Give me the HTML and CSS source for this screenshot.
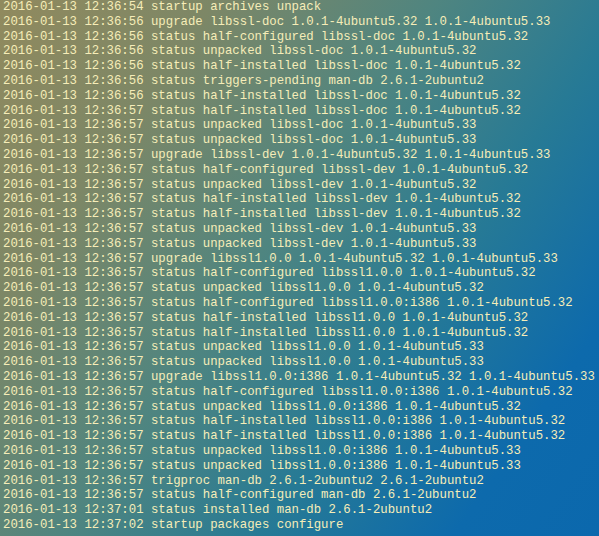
FILE: index.html
```html
<!DOCTYPE html>
<html>
<head>
<meta charset="utf-8">
<link rel="stylesheet" href="styles.css">
</head>
<body>
<pre class="log">2016-01-13 12:36:54 startup archives unpack
2016-01-13 12:36:56 upgrade libssl-doc 1.0.1-4ubuntu5.32 1.0.1-4ubuntu5.33
2016-01-13 12:36:56 status half-configured libssl-doc 1.0.1-4ubuntu5.32
2016-01-13 12:36:56 status unpacked libssl-doc 1.0.1-4ubuntu5.32
2016-01-13 12:36:56 status half-installed libssl-doc 1.0.1-4ubuntu5.32
2016-01-13 12:36:56 status triggers-pending man-db 2.6.1-2ubuntu2
2016-01-13 12:36:56 status half-installed libssl-doc 1.0.1-4ubuntu5.32
2016-01-13 12:36:57 status half-installed libssl-doc 1.0.1-4ubuntu5.32
2016-01-13 12:36:57 status unpacked libssl-doc 1.0.1-4ubuntu5.33
2016-01-13 12:36:57 status unpacked libssl-doc 1.0.1-4ubuntu5.33
2016-01-13 12:36:57 upgrade libssl-dev 1.0.1-4ubuntu5.32 1.0.1-4ubuntu5.33
2016-01-13 12:36:57 status half-configured libssl-dev 1.0.1-4ubuntu5.32
2016-01-13 12:36:57 status unpacked libssl-dev 1.0.1-4ubuntu5.32
2016-01-13 12:36:57 status half-installed libssl-dev 1.0.1-4ubuntu5.32
2016-01-13 12:36:57 status half-installed libssl-dev 1.0.1-4ubuntu5.32
2016-01-13 12:36:57 status unpacked libssl-dev 1.0.1-4ubuntu5.33
2016-01-13 12:36:57 status unpacked libssl-dev 1.0.1-4ubuntu5.33
2016-01-13 12:36:57 upgrade libssl1.0.0 1.0.1-4ubuntu5.32 1.0.1-4ubuntu5.33
2016-01-13 12:36:57 status half-configured libssl1.0.0 1.0.1-4ubuntu5.32
2016-01-13 12:36:57 status unpacked libssl1.0.0 1.0.1-4ubuntu5.32
2016-01-13 12:36:57 status half-configured libssl1.0.0:i386 1.0.1-4ubuntu5.32
2016-01-13 12:36:57 status half-installed libssl1.0.0 1.0.1-4ubuntu5.32
2016-01-13 12:36:57 status half-installed libssl1.0.0 1.0.1-4ubuntu5.32
2016-01-13 12:36:57 status unpacked libssl1.0.0 1.0.1-4ubuntu5.33
2016-01-13 12:36:57 status unpacked libssl1.0.0 1.0.1-4ubuntu5.33
2016-01-13 12:36:57 upgrade libssl1.0.0:i386 1.0.1-4ubuntu5.32 1.0.1-4ubuntu5.33
2016-01-13 12:36:57 status half-configured libssl1.0.0:i386 1.0.1-4ubuntu5.32
2016-01-13 12:36:57 status unpacked libssl1.0.0:i386 1.0.1-4ubuntu5.32
2016-01-13 12:36:57 status half-installed libssl1.0.0:i386 1.0.1-4ubuntu5.32
2016-01-13 12:36:57 status half-installed libssl1.0.0:i386 1.0.1-4ubuntu5.32
2016-01-13 12:36:57 status unpacked libssl1.0.0:i386 1.0.1-4ubuntu5.33
2016-01-13 12:36:57 status unpacked libssl1.0.0:i386 1.0.1-4ubuntu5.33
2016-01-13 12:36:57 trigproc man-db 2.6.1-2ubuntu2 2.6.1-2ubuntu2
2016-01-13 12:36:57 status half-configured man-db 2.6.1-2ubuntu2
2016-01-13 12:37:01 status installed man-db 2.6.1-2ubuntu2
2016-01-13 12:37:02 startup packages configure</pre>
</body>
</html>
```
FILE: styles.css
```css
html, body {
  margin: 0;
  padding: 0;
  height: 100%;
}
body {
  background: linear-gradient(125deg, #918a5e 0%, #7d8766 22%, #4f8580 45%, #277a95 65%, #0d6aac 85%, #0b68ad 100%);
  overflow: hidden;
}
.log {
  margin: 0;
  padding: 0 0 0 3px;
  font-family: "Liberation Mono", "Courier New", monospace;
  font-size: 12.33px;
  line-height: 14.8px;
  color: #f6edb8;
  white-space: pre;
}
```
